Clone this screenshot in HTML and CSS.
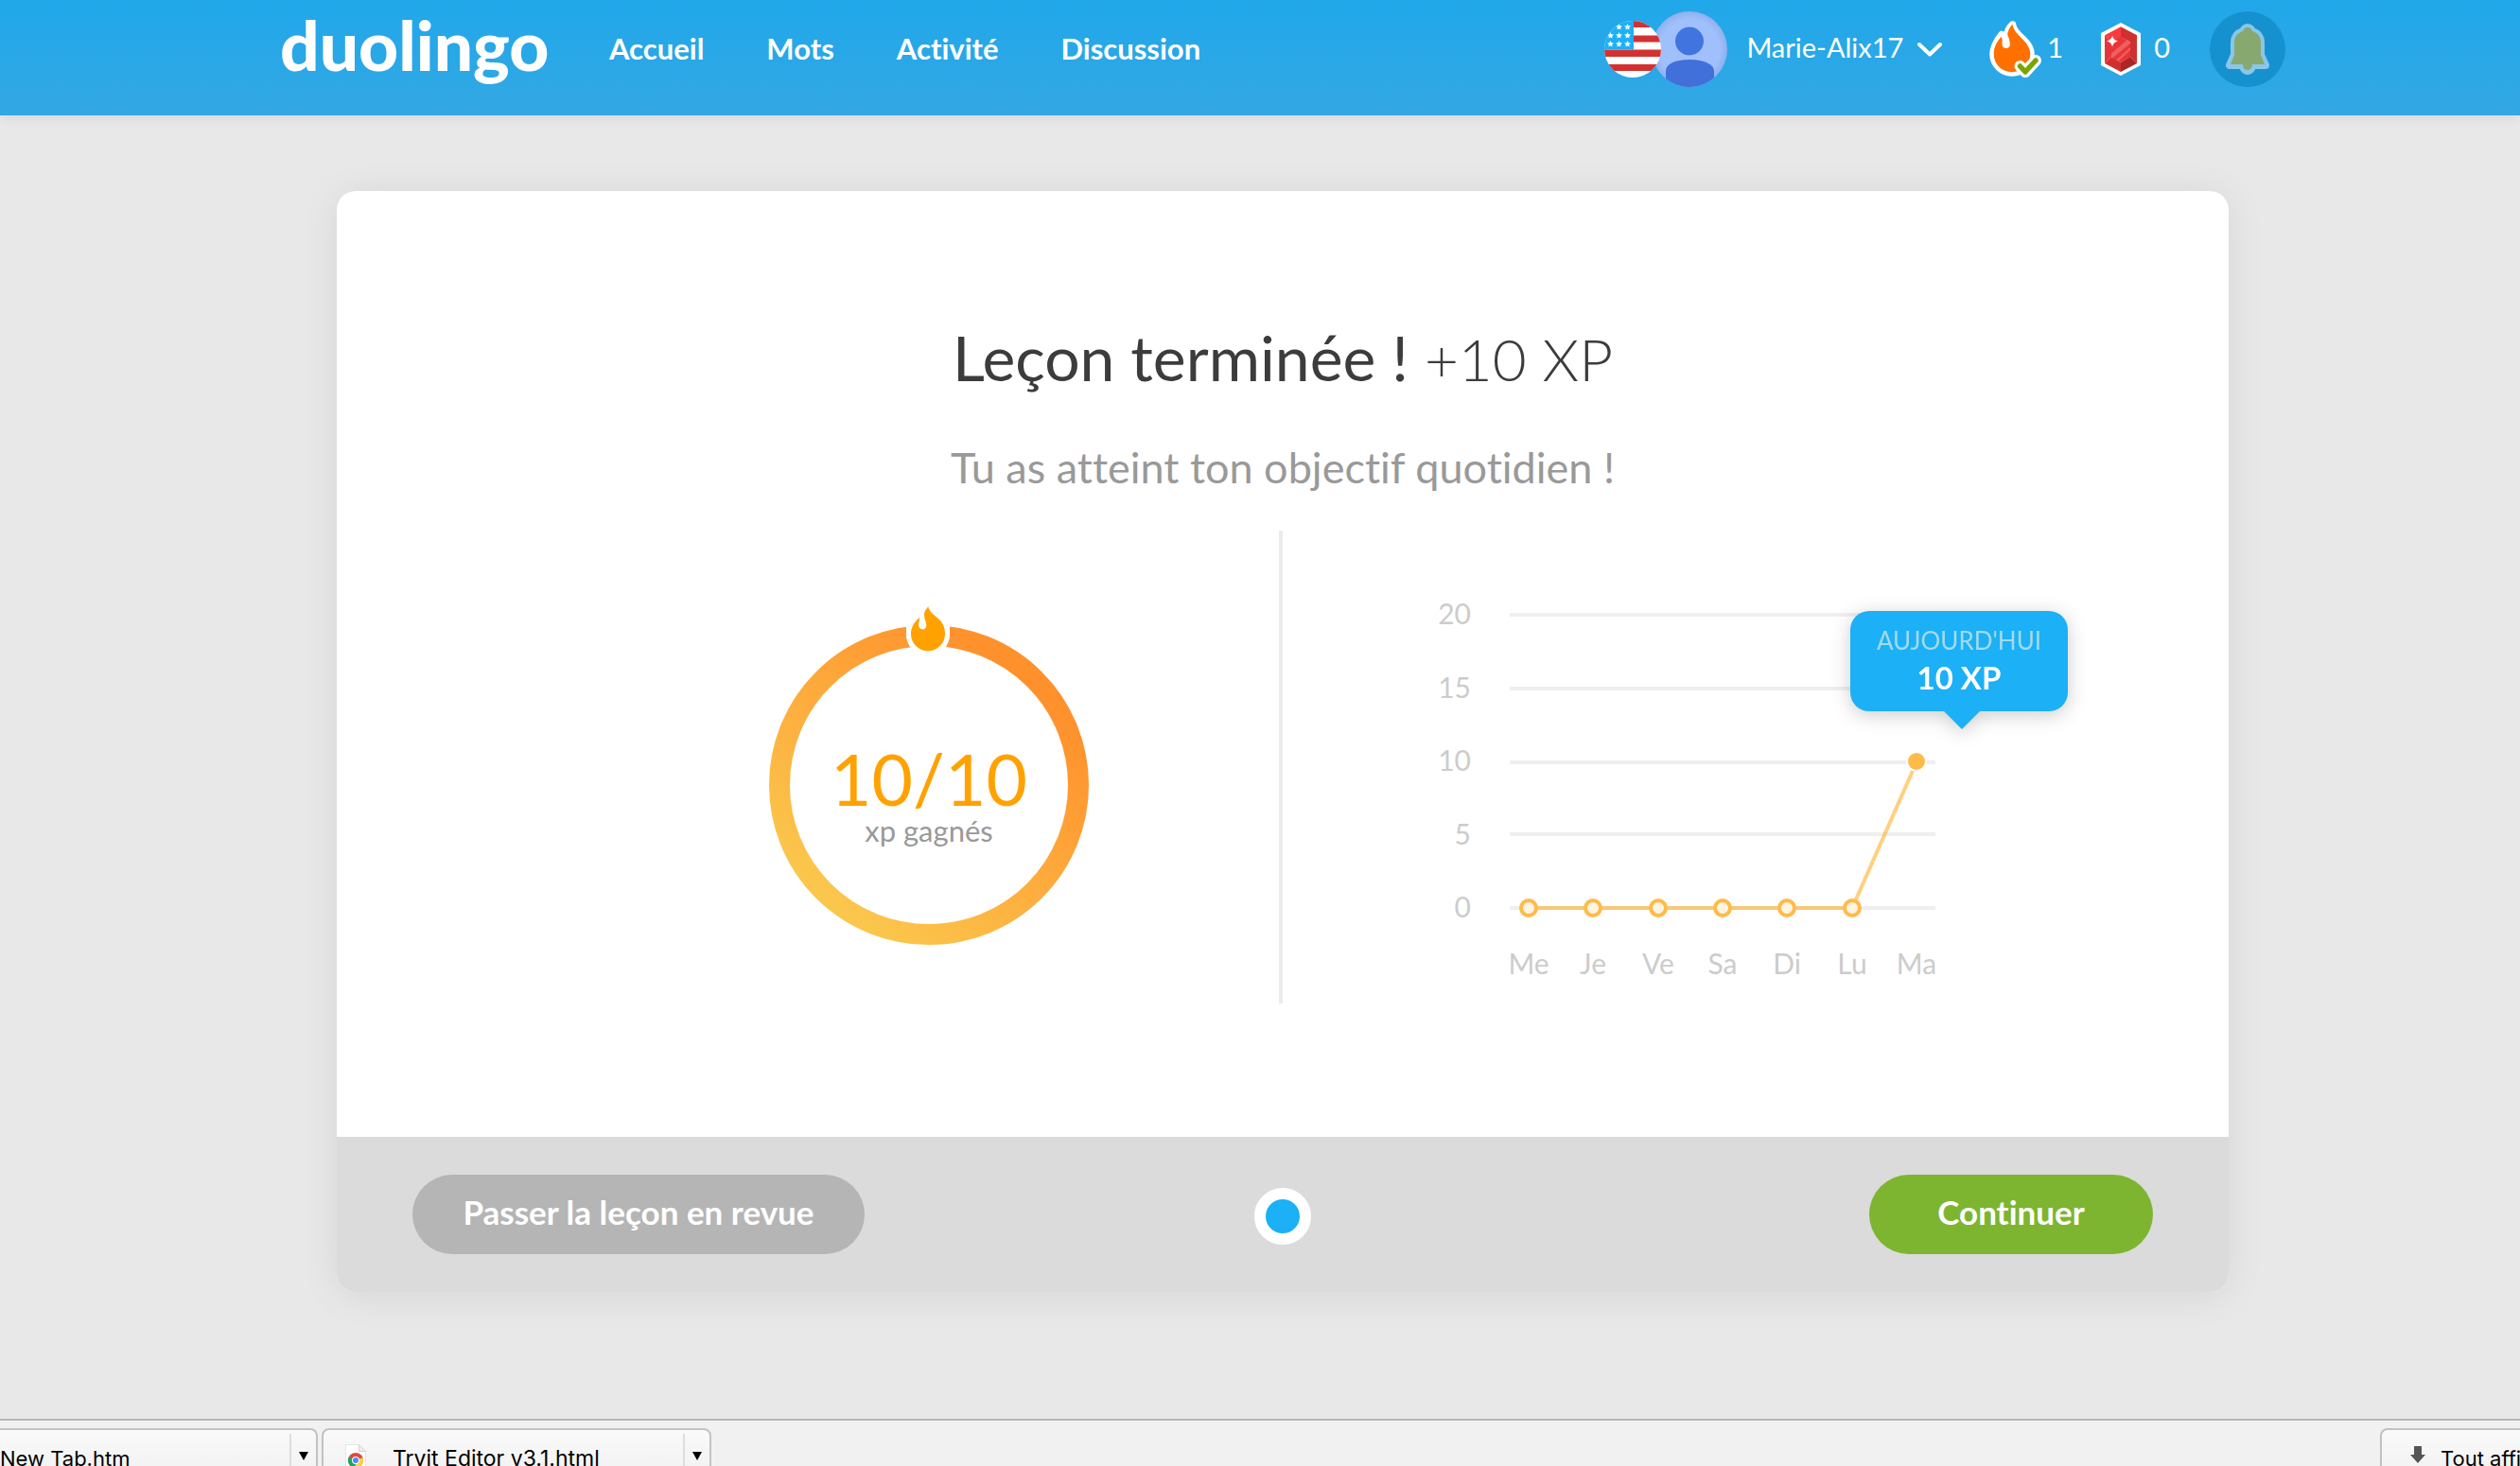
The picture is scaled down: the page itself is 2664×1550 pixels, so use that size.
FILE: index.html
```html
<!DOCTYPE html>
<html lang="fr">
<head>
<meta charset="utf-8">
<meta name="viewport" content="width=device-width, initial-scale=1">
<title>Duolingo</title>
<link rel="stylesheet" href="styles.css">
</head>
<body>
<header class="topbar">
  <div class="topbar-inner">
    <a class="logo" href="#">duolingo</a>
    <nav class="nav">
      <a href="#">Accueil</a>
      <a href="#">Mots</a>
      <a href="#">Activité</a>
      <a href="#">Discussion</a>
    </nav>
    <div class="account">
      <button class="profile" type="button">
        <svg class="flag" viewBox="0 0 60 60" aria-hidden="true">
          <defs><clipPath id="flagClip"><circle cx="30" cy="30" r="30"/></clipPath>
          <path id="star" d="M0-3.4 1-1.2 3.4-1 1.6.7 2.1 3 0 1.8-2.1 3-1.6.7-3.4-1-1-1.2z" fill="#fff"/></defs>
          <g clip-path="url(#flagClip)">
            <path fill="#fff" d="M0 0h60v60H0z"/>
            <path fill="#d33131" d="M30 0h30v7H30zM30 15.500h30v7H30zM0 30.500h60V38H0zM0 46h60v7H0z"/>
            <path fill="#1cb0f6" d="M0 0h31v30.500H0z"/>
            <use href="#star" x="15.500" y="6.500"/><use href="#star" x="24.500" y="6.500"/>
            <use href="#star" x="6.500" y="15.500"/><use href="#star" x="15.500" y="15.500"/><use href="#star" x="24.500" y="15.500"/>
            <use href="#star" x="6.500" y="24.500"/><use href="#star" x="15.500" y="24.500"/><use href="#star" x="24.500" y="24.500"/>
          </g>
        </svg>
        <svg class="avatar" viewBox="0 0 80 80" aria-hidden="true">
          <defs><clipPath id="avClip"><circle cx="40" cy="40" r="40"/></clipPath>
          <radialGradient id="avBg"><stop offset="0.800" stop-color="#a0c0fc"/><stop offset="1" stop-color="#8eb0ee"/></radialGradient></defs>
          <g clip-path="url(#avClip)">
            <path fill="url(#avBg)" d="M0 0h80v80H0z"/>
            <circle cx="40" cy="31.500" r="15" fill="#4274e0"/>
            <path fill="#4170da" d="M15 80V63c0-6 8-12 25-12s26 6 26 12v17z"/>
          </g>
        </svg>
        <span class="name">Marie-Alix17</span>
        <svg class="chevron" viewBox="0 0 28 16" aria-hidden="true"><path d="M3 3l11 10.500L25 3" fill="none" stroke="#fff" stroke-width="4" stroke-linecap="round" stroke-linejoin="round"/></svg>
      </button>
      <a class="stat streak" href="#" aria-label="Série : 1">
        <svg class="streak-icon" viewBox="0 0 54 60" aria-hidden="true">
          <path d="M23.500 4C19 8 17.500 12 17.800 18L12 14.500C6 22 3 28 3 35a20 20 0 0 0 40 0C43 21 25 16 23.500 4Z" fill="#ff7000" stroke="#fff" stroke-width="7.500" stroke-linejoin="round"/>
          <path d="M23.500 3.500C19.500 8 17.500 13 18 19L11.500 17C6 23 3.700 29 3.700 35a19.300 19.300 0 0 0 38.600 0C42.300 21 25 16 23.500 3.500Z" fill="#ff7000"/>
          <path d="M11.500 15.500Q13.500 20 12.500 25A4.300 4.600 0 0 0 21 25Q20 18 18 14z" fill="#fff"/>
          <path d="M31.500 48l5.500 6L48 42" fill="none" stroke="#fff" stroke-width="12" stroke-linecap="round" stroke-linejoin="round"/>
          <path d="M31.500 48l5.500 6L48 42" fill="none" stroke="#7aa500" stroke-width="5.500" stroke-linecap="round" stroke-linejoin="round"/>
        </svg>
        <span>1</span>
      </a>
      <a class="stat gems" href="#" aria-label="Gemmes : 0">
        <svg class="gem-icon" viewBox="0 0 42 56" aria-hidden="true">
          <path fill="#fff" d="M21 0 42 11v34L21 56 0 45V11z"/>
          <path fill="#fb3b3f" d="M21 4.300V15L11 20.500 4 13.300z"/>
          <path fill="#d13030" d="M21 4.300V15l10 5.500v15.500L38 43V13.300z"/>
          <path fill="#e6353a" d="M4 13.300 11 20.500v15.500L4 43z"/>
          <path fill="#d13030" d="M4 43l7-7 10 6v10z"/>
          <path fill="#ab2629" d="M38 43l-7-7-10 6v10z"/>
          <path fill="#e83539" d="M21 14.500 31 21v15.500L21 42l-10-5.500V20z"/>
          <path fill="#ef5f60" d="M11 32.500 28 18l3 3v1L12 37.500 11 37zM16 39.500 31 26v3L18.500 40.500z"/>
          <path fill="#fff" d="M12 13.500q1 5 6 6-5 1-6 6-1-5-6-6 5-1 6-6z"/>
        </svg>
        <span>0</span>
      </a>
      <button class="bell" type="button" aria-label="Notifications">
        <svg viewBox="0 0 44 54" aria-hidden="true">
          <path d="M22 4c-3 0-4 2-5 4-6 2-9 6-9 12v13L3 44h14c0 3 2 6 5 6s5-3 5-6h14l-5-11V20c0-6-3-10-9-12-1-2-2-4-5-4z" fill="#87a96f" stroke="#8ac6e7" stroke-width="8" stroke-linejoin="round"/>
          <path d="M22 4c-3 0-4 2-5 4-6 2-9 6-9 12v13L4 43h13c0 3 2 6 5 6s5-3 5-6h13l-4-10V20c0-6-3-10-9-12-1-2-2-4-5-4z" fill="#87a96f"/>
        </svg>
      </button>
    </div>
  </div>
</header>

<main class="page">
  <section class="card">
    <div class="card-body">
      <h1 class="title">Leçon terminée ! <span>+10 XP</span></h1>
      <p class="subtitle">Tu as atteint ton objectif quotidien !</p>
      <div class="stats">
        <div class="goal">
          <svg class="ring" viewBox="0 0 338 358" role="img" aria-label="10/10 xp gagnés">
            <defs><linearGradient id="ringFill" x1="0.200" y1="0.900" x2="0.800" y2="0.150"><stop offset="0" stop-color="#fbc64c"/><stop offset="1" stop-color="#ff912d"/></linearGradient></defs>
            <circle cx="169" cy="189" r="158" fill="none" stroke="url(#ringFill)" stroke-width="22"/>
            <path fill="#fff" d="M145 12h46v18a23 23 0 0 1-46 0z"/>
            <circle cx="168" cy="29" r="23" fill="#fff"/>
            <path fill="#ffa200" transform="translate(150 0) scale(.3333)" d="M55 0C57 16 69 24 83 36 100 50 108 64 108 88A54 54 0 0 1 0 88C0 65 10 52 26 36 30 45 24 50 24 58 24 78 49 78 49 60 49 50 42 42 42 28 42 14 50 8 55 0Z"/>
            <text class="goal-value" x="169" y="211">10/10</text>
            <text class="goal-label" x="169" y="249">xp gagnés</text>
          </svg>
        </div>
        <div class="history">
          <div class="chart-wrap">
            <svg class="chart" viewBox="0 0 560 420" role="img" aria-label="XP des sept derniers jours">
              <g class="grid">
                <path d="M82 30h450M82 108h450M82 186h450M82 262h450M82 340h450"/>
              </g>
              <g class="y-labels">
                <text x="41" y="40">20</text><text x="41" y="118">15</text><text x="41" y="195">10</text><text x="41" y="273">5</text><text x="41" y="350">0</text>
              </g>
              <circle cx="512" cy="185" r="11" fill="#fff"/>
              <path class="line" d="M102 340H444L508 195"/>
              <circle cx="512" cy="185" r="9" fill="#ffbb49"/>
              <g class="points">
                <circle cx="102" cy="340" r="8"/><circle cx="170" cy="340" r="8"/><circle cx="239" cy="340" r="8"/><circle cx="307" cy="340" r="8"/><circle cx="375" cy="340" r="8"/><circle cx="444" cy="340" r="8"/>
              </g>
              <g class="x-labels">
                <text x="102" y="410">Me</text><text x="170" y="410">Je</text><text x="239" y="410">Ve</text><text x="307" y="410">Sa</text><text x="375" y="410">Di</text><text x="444" y="410">Lu</text><text x="512" y="410">Ma</text>
              </g>
            </svg>
            <div class="tip"><span class="tip-day">Aujourd'hui</span><strong>10 XP</strong></div>
          </div>
        </div>
      </div>
    </div>
    <footer class="card-footer">
      <button class="btn btn-review" type="button">Passer la leçon en revue</button>
      <span class="step"></span>
      <button class="btn btn-next" type="button">Continuer</button>
    </footer>
  </section>
</main>

<aside class="downloads" aria-label="Téléchargements">
  <div class="file file-first">
    <a href="#">New Tab.htm</a>
    <button type="button" aria-label="Options"><svg viewBox="0 0 10 10"><path d="M0 1h10L5 10z"/></svg></button>
  </div>
  <div class="file file-second">
    <a href="#">
      <svg class="file-icon" viewBox="0 0 22 30" aria-hidden="true">
        <path d="M.5.500h14l7 7v22H.500z" fill="#fff" stroke="#e4e4e4"/><path d="M14.500.500v7h7z" fill="#eee" stroke="#d4d4d4"/>
        <circle cx="11" cy="17" r="8" fill="#dd4b3e"/>
        <path d="M11 17 4 13A8 8 0 0 0 10.500 25z" fill="#1da462"/><path d="M11 17l-.5 8A8 8 0 0 0 18.500 14z" fill="#ffcd46"/>
        <circle cx="11" cy="17" r="4" fill="#fff"/><circle cx="11" cy="17" r="3" fill="#4c8bf5"/>
      </svg>
      Tryit Editor v3.1.html
    </a>
    <button type="button" aria-label="Options"><svg viewBox="0 0 10 10"><path d="M0 1h10L5 10z"/></svg></button>
  </div>
  <button class="show-all" type="button">
    <svg viewBox="0 0 16 18" aria-hidden="true"><path d="M4 0h8v9h4l-8 9-8-9h4z" fill="#555"/></svg>
    Tout afficher
  </button>
</aside>
</body>
</html>
```
FILE: styles.css
```css
*, *::before { box-sizing: border-box; }

body {
  margin: 0;
  height: 100vh;
  overflow: hidden;
  display: flex;
  flex-direction: column;
  background: #e8e8e8;
  font-family: Lato, "Open Sans", sans-serif;
  font-variant-ligatures: none;
  color: #3c3c3c;
}

a { color: inherit; text-decoration: none; }
button { font: inherit; color: inherit; border: 0; padding: 0; background: none; cursor: pointer; }
svg { display: block; flex: none; }

/* Top bar */
.topbar {
  flex: none;
  padding-left: 48px;
  background: linear-gradient(#20a8ea, #33a7e3);
  box-shadow: 0 2px 12px rgba(0, 0, 0, .08);
  color: #fff;
}
.topbar-inner {
  max-width: 2120px;
  height: 122px;
  margin: 0 auto;
  padding-bottom: 18px;
  display: flex;
  align-items: center;
}
.logo { width: 348px; padding-bottom: 10px; font-size: 73px; font-weight: 900; line-height: 80px; }
.nav { display: flex; gap: 66px; padding-bottom: 2px; font-size: 31px; font-weight: 700; }
.account { margin-left: auto; display: flex; align-items: center; font-size: 29px; }
.profile { display: flex; align-items: center; }
.flag { width: 60px; height: 60px; position: relative; z-index: 1; }
.avatar { width: 80px; height: 80px; margin-left: -10px; }
.name { margin: 0 14px 6px 20px; }
.chevron { width: 28px; height: 16px; }
.stat { display: flex; align-items: center; gap: 6px; }
.stat span { margin-bottom: 6px; }
.streak { margin-left: 50px; }
.streak-icon { width: 54px; height: 60px; overflow: visible; }
.gems { margin-left: 40px; gap: 14px; }
.gem-icon { width: 42px; height: 56px; }
.bell {
  width: 80px;
  height: 80px;
  margin-left: 42px;
  display: grid;
  place-items: center;
  border-radius: 50%;
  background: #1591d0;
}
.bell svg { width: 44px; height: 54px; overflow: visible; }

/* Lesson card */
.page { flex: 1; min-height: 0; padding: 80px 0 0 48px; }
.card {
  max-width: 2000px;
  margin: 0 auto;
  border-radius: 20px;
  background: #fff;
  box-shadow: 0 4px 40px rgba(0, 0, 0, .08);
}
.card-body { padding: 138px 0 141px; text-align: center; }
.title { margin: 0; font-size: 66px; line-height: 76px; font-weight: 400; }
.title span { font-size: 62px; line-height: 62px; font-weight: 300; }
.subtitle { margin: 52px 0 41px; font-size: 45px; line-height: 52px; color: #999; }

.stats { display: grid; grid-template-columns: 1fr 1fr; height: 500px; }
.goal {
  display: flex;
  justify-content: flex-end;
  padding: 80px 201px 0 0;
  border-right: 4px solid #ebebeb;
}
.ring { width: 338px; height: 358px; }
.ring text { text-anchor: middle; }
.goal-value { font-size: 75px; fill: #ffa200; }
.goal-label { font-size: 31px; fill: #999; }

.history { padding: 59px 0 0 158px; }
.chart-wrap { position: relative; width: 560px; }
.chart { width: 560px; height: 420px; }
.grid path { stroke: #efefef; stroke-width: 4; }
.y-labels, .x-labels { font-size: 30px; fill: #ccc; }
.y-labels { text-anchor: end; }
.x-labels { text-anchor: middle; }
.line { fill: none; stroke: #ffa200; stroke-opacity: .5; stroke-width: 4; }
.points circle { fill: #fff4e2; stroke: #ffbb49; stroke-width: 4; }
.tip {
  position: absolute;
  top: 26px;
  left: 442px;
  width: 230px;
  height: 106px;
  padding-top: 14px;
  border-radius: 20px;
  background: #1cb0f6;
  color: #fff;
  filter: drop-shadow(0 4px 10px rgba(0, 0, 0, .2));
}
.tip::before {
  content: "";
  position: absolute;
  top: 105px;
  left: 98px;
  border: 20px solid transparent;
  border-top-color: #1cb0f6;
  border-bottom: 0;
}
.tip-day, .tip strong { display: block; }
.tip-day { font-size: 26px; line-height: 34px; text-transform: uppercase; color: #a3daeb; }
.tip strong { font-size: 33px; line-height: 44px; }

.card-footer {
  display: grid;
  grid-template-columns: 1fr auto 1fr;
  align-items: center;
  padding: 40px 80px;
  border-radius: 0 0 20px 20px;
  background: #dbdbdb;
}
.btn { height: 84px; border-radius: 42px; color: #fff; font-size: 35px; font-weight: 700; padding-bottom: 6px; }
.btn-review { width: 478px; background: #b5b5b5; }
.btn-next { width: 300px; justify-self: end; background: #7eb530; }
.step { width: 60px; height: 60px; margin-top: 4px; border: 12px solid #fff; border-radius: 50%; background: #1cb0f6; }

/* Download shelf */
.downloads {
  flex: none;
  height: 50px;
  padding-top: 8px;
  display: flex;
  gap: 4px;
  overflow: hidden;
  border-top: 2px solid #b5b5b5;
  background: #f1f1f1;
  font-family: Inter, "Liberation Sans", sans-serif;
  font-size: 22px;
  line-height: 26px;
  color: #000;
}
.file, .show-all {
  height: 60px;
  border: 2px solid #c2c2c2;
  border-radius: 8px;
  background: linear-gradient(#fafafa, #f0f0f0);
}
.file { display: flex; }
.file a { flex: 1; display: flex; gap: 28px; padding: 17px 0 0 23px; white-space: nowrap; }
.file button { width: 28px; margin-top: 4px; padding-left: 8px; border-left: 2px solid #ddd; }
.file button svg { width: 10px; height: 10px; margin-top: -6px; }
.file-first { width: 336px; border-left: 0; border-radius: 0 8px 8px 0; }
.file-first a { padding-left: 0; }
.file-second { width: 412px; font-size: 23px; }
.file-icon { width: 22px; height: 30px; margin-top: -2px; }
.show-all {
  width: 148px;
  margin-left: auto;
  padding: 17px 0 0 30px;
  display: flex;
  gap: 16px;
  overflow: hidden;
  border-right: 0;
  border-radius: 8px 0 0 8px;
  white-space: nowrap;
}
.show-all svg { width: 16px; height: 18px; }
```
